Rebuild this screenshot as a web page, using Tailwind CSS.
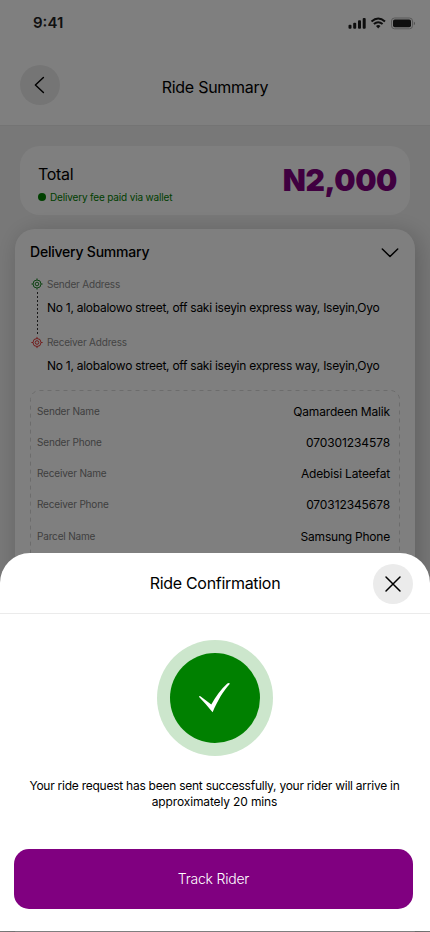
<!DOCTYPE html>
<html lang="en">
<head>
<meta charset="utf-8">
<title>Ride Confirmation</title>
<script src="https://cdn.jsdelivr.net/npm/@tailwindcss/browser@4"></script>
</head>
<body>
<div class="relative w-[430px] h-[932px] overflow-hidden bg-[#f1f1f1] text-black font-['Inter','Liberation_Sans',sans-serif]">
  <header class="h-[126px] bg-white border-b border-[#e8e8e8]">
    <div class="h-[45px] pl-[33px] pr-[15px] flex items-center justify-between">
      <span class="text-[15px] leading-[20px] font-semibold text-[#222]">9:41</span>
      <svg class="w-[67px] h-[14px]" viewBox="0 0 67 14" fill="#1c1c1c">
        <rect x="0.5" y="8.7" width="3" height="4" rx="1"/><rect x="5.2" y="6.7" width="3" height="6" rx="1"/><rect x="10" y="4.3" width="3" height="8.4" rx="1"/><rect x="14.7" y="2" width="3" height="10.7" rx="1"/>
        <g fill="none" stroke="#1c1c1c" stroke-width="2"><path d="M23.5 5.5Q30.2 -0.6 37 5.5"/><path d="M25.9 8.1Q30.2 4.3 34.6 8.1"/></g>
        <path d="M28 10Q30.2 8.2 32.5 10L30.2 12.4Z"/>
        <rect x="43.5" y="2" width="21" height="10.8" rx="3" fill="none" stroke="#b0b0b0"/>
        <rect x="45" y="3.5" width="18" height="7.8" rx="1.8"/><path d="M65.8 5.5Q67 6.3 67 7.4T65.8 9.3Z" fill="#a0a0a0"/>
      </svg>
    </div>
    <div class="mt-[20px] px-5 grid grid-cols-[40px_1fr_40px] items-center">
      <div class="size-10 rounded-full bg-[#ebebeb] flex items-center justify-center">
        <svg class="size-10" viewBox="0 0 40 40" fill="none" stroke="#000" stroke-width="1.5" stroke-linecap="round" stroke-linejoin="round"><path d="M23.4 12.5L15.4 20L23.4 27.5"/></svg>
      </div>
      <h1 class="pt-[4px] text-center text-[16px] leading-[20px] tracking-[-0.26px]">Ride Summary</h1>
    </div>
  </header>

  <section class="mt-[20px] mx-5 h-[69px] rounded-[20px] bg-white pl-[18px] pr-[13px] flex justify-between">
    <div class="pt-[18px]">
      <div class="text-[16px] leading-[20px] tracking-[-0.3px]">Total</div>
      <div class="mt-[7px] flex items-center gap-1 text-[10px] leading-[12px] tracking-[-0.16px] text-[#008000]"><span class="size-2 rounded-full bg-[#008000]"></span><span>Delivery fee paid via wallet</span></div>
    </div>
    <div class="pt-[15px] text-[30px] leading-[38px] font-black tracking-[-0.4px] text-[#800080]">N2,000</div>
  </section>

  <section class="mt-[14px] mx-[15px] h-[720px] rounded-[20px] bg-white px-[15px] shadow-[4px_4px_25px_rgba(0,0,0,0.22)]">
    <div class="pt-[14px] flex justify-between">
      <h2 class="text-[14px] leading-[18px] tracking-[-0.22px] font-medium">Delivery Summary</h2>
      <svg class="w-5 h-5" viewBox="0 0 20 20" fill="none" stroke="#000" stroke-width="1.5" stroke-linecap="round" stroke-linejoin="round"><path d="M2.3 6L10 13.5L17.7 6"/></svg>
    </div>
    <div class="mt-[14px] h-[58px] flex gap-[2.5px]">
      <div class="w-[14.5px] flex flex-col items-center">
        <svg class="size-[14px] shrink-0" viewBox="0 0 14 14" fill="none" stroke="#21882b"><circle cx="7" cy="7" r="4"/><circle cx="7" cy="7" r="1.8"/><path d="M7 1.4V3M7 11V12.6M1.4 7H3M11 7H12.6"/></svg>
        <svg class="w-px h-[43px] mt-[1px] shrink-0" viewBox="0 0 1 43" stroke="#333"><path d="M0.5 0V43" stroke-dasharray="2 2"/></svg>
      </div>
      <div class="pt-[1px]"><div class="text-[10px] leading-[12px] tracking-[-0.2px] text-[#888]">Sender Address</div><div class="mt-[10px] text-[12px] leading-[16px] tracking-[-0.265px] whitespace-nowrap">No 1, alobalowo street, off saki iseyin express way, Iseyin,Oyo</div></div>
    </div>
    <div class="h-[55px] flex gap-[2.5px]">
      <div class="w-[14.5px] flex flex-col items-center">
        <svg class="size-[14px] shrink-0" viewBox="0 0 14 14" fill="none" stroke="#e43a3a"><circle cx="7" cy="7.5" r="4"/><circle cx="7" cy="7.5" r="1.8"/><path d="M7 1.9V3.5M7 11.5V13.1M1.4 7.5H3M11 7.5H12.6"/></svg>
      </div>
      <div class="pt-[1px]"><div class="text-[10px] leading-[12px] tracking-[-0.2px] text-[#888]">Receiver Address</div><div class="mt-[10px] text-[12px] leading-[16px] tracking-[-0.265px] whitespace-nowrap">No 1, alobalowo street, off saki iseyin express way, Iseyin,Oyo</div></div>
    </div>
    <div class="h-[400px] rounded-[10px] relative">
      <svg class="absolute inset-0 w-full h-full" fill="none"><rect x="0.5" y="0.5" width="369" height="399" rx="9" stroke="#d8d8d8" stroke-dasharray="4 4"/></svg>
      <div class="pt-[6px] pl-[7px] pr-[10px] text-[12px] tracking-[-0.17px]">
        <div class="h-[31px] flex items-center justify-between"><span class="text-[10px] text-[#808080]">Sender Name</span><span>Qamardeen Malik</span></div>
        <div class="h-[31px] flex items-center justify-between"><span class="text-[10px] text-[#808080]">Sender Phone</span><span class="tracking-[-0.1px]">070301234578</span></div>
        <div class="h-[31px] flex items-center justify-between"><span class="text-[10px] text-[#808080]">Receiver Name</span><span>Adebisi Lateefat</span></div>
        <div class="h-[31px] flex items-center justify-between"><span class="text-[10px] text-[#808080]">Receiver Phone</span><span class="tracking-[-0.1px]">070312345678</span></div>
        <div class="h-[33px] flex items-center justify-between"><span class="text-[10px] text-[#808080]">Parcel Name</span><span class="tracking-[-0.22px]">Samsung Phone</span></div>
      </div>
    </div>
  </section>

  <div class="absolute inset-0 bg-black/50"></div>

  <div class="absolute left-0 top-[553px] w-[430px] h-[378px] rounded-t-[30px] bg-white">
    <div class="h-[61px] border-b border-[#ebebeb] pl-[57px] pr-[17px] flex items-center">
      <h2 class="flex-1 text-center text-[16px] leading-[20px] tracking-[-0.3px]">Ride Confirmation</h2>
      <div class="mt-[2px] size-10 rounded-full bg-[#ebebeb]">
        <svg class="size-10" viewBox="0 0 40 40" fill="none" stroke="#000" stroke-width="1.5" stroke-linecap="round"><path d="M13 13L27 27M27 13L13 27"/></svg>
      </div>
    </div>
    <div class="mt-[26px] mx-auto size-[116px] rounded-full bg-[#cce6cc] flex items-center justify-center">
      <div class="size-[90px] rounded-full bg-[#008000]">
        <svg class="size-[90px]" viewBox="0 0 90 90" fill="#fff"><path d="M29.1 44Q29 42.7 30.4 43.2L41.3 51.4C46 43.5 51 36 57.3 30.5Q58.5 29.8 59.7 30.2L59.5 31.3C53 38.5 48 47 42.6 59.3Q36 51 29.1 44Z"/></svg>
      </div>
    </div>
    <p class="mt-[22px] pr-[1px] text-center text-[12px] leading-[16px] tracking-[-0.25px]">Your ride request has been sent successfully, your rider will arrive in<br><span class="tracking-[-0.14px]">approximately 20 mins</span></p>
    <button class="mt-[39px] ml-[14px] w-[399px] h-[60px] rounded-[15px] bg-[#800080] text-white text-[14px] leading-[18px] tracking-[-0.22px] font-light">Track Rider</button>
  </div>
</div>
</body>
</html>
